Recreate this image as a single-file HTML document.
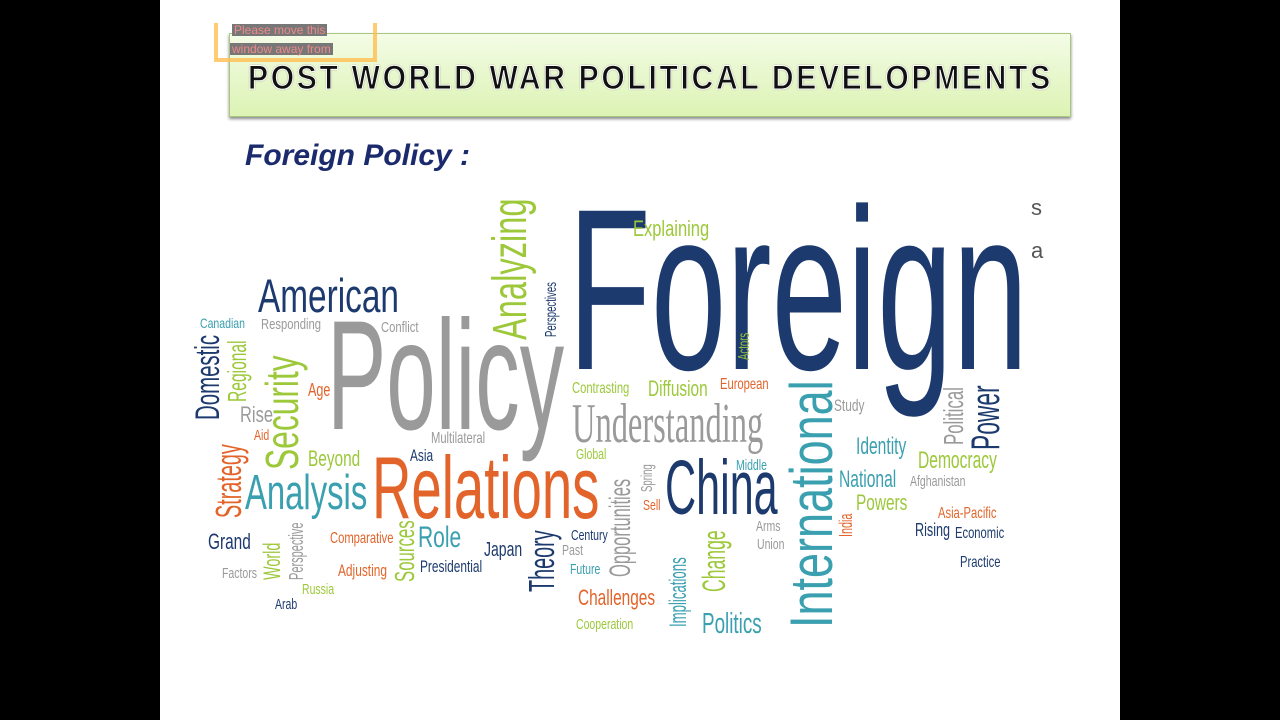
<!DOCTYPE html>
<html><head><meta charset="utf-8"><style>
*{margin:0;padding:0;box-sizing:border-box}
body{width:1280px;height:720px;background:#000;position:relative;overflow:hidden;font-family:"Liberation Sans",sans-serif}
#slide{position:absolute;left:160px;top:0;width:960px;height:720px;background:#fff}
.w{position:absolute;line-height:1;white-space:nowrap;transform-origin:left top;font-family:"Liberation Sans",sans-serif}
.n{color:#1d3a6e}.g{color:#9a9a9a}.o{color:#e2642a}.t{color:#3aa0b0}.gr{color:#9cc83a}
</style></head><body>
<div id="slide"></div>
<div style="position:absolute;left:229px;top:33px;width:842px;height:84px;background:linear-gradient(#f4fce6,#dcf3b4);border:1px solid #a8c880;box-shadow:0 2px 3px #888"></div>
<div class="w" style="left:248px;top:61px;font-size:34px;font-weight:bold;color:#111;letter-spacing:3px;transform:scaleX(0.885);-webkit-text-stroke:1px #fff;text-shadow:0 0 2px #666">POST WORLD WAR POLITICAL DEVELOPMENTS</div>
<div style="position:absolute;left:214px;top:23px;width:163px;height:39px;border:4px solid rgba(255,190,80,.8);border-top:none"></div>
<div class="w" style="left:232px;top:24px;font-size:12px;color:#e88;background:#777;padding:0 2px">Please move this</div>
<div class="w" style="left:230px;top:43px;font-size:12px;color:#e88;background:#777;padding:0 2px">window away from</div>
<div class="w" style="left:245px;top:141px;font-size:30px;font-weight:bold;font-style:italic;color:#1a2a6c">Foreign Policy :</div>
<div class="w" style="left:1031px;top:197px;font-size:22px;color:#555">s</div>
<div class="w" style="left:1031px;top:240px;font-size:22px;color:#555">a</div>

<div class="w n" style="left:568px;top:175px;font-size:230px;transform:scaleX(.59)">Foreign</div>
<div class="w g" style="left:327px;top:298px;font-size:156px;transform:scaleX(.57)">Policy</div>
<div class="w o" style="left:372px;top:444px;font-size:88px;transform:scaleX(.62)">Relations</div>
<div class="w g" style="left:572px;top:396px;font-size:56px;transform:scaleX(.58);font-family:'Liberation Serif',serif">Understanding</div>
<div class="w n" style="left:665px;top:450px;font-size:77px;transform:scaleX(.56)">China</div>
<div class="w n" style="left:258px;top:272px;font-size:47px;transform:scaleX(.71)">American</div>
<div class="w t" style="left:245px;top:469px;font-size:49px;transform:scaleX(.67)">Analysis</div>
<div class="w gr" style="left:633px;top:218px;font-size:22px;transform:scaleX(.75)">Explaining</div>

<div class="w t" style="left:782px;top:628px;font-size:60px;transform:rotate(-90deg) scaleX(.75)">International</div>
<div class="w gr" style="left:259px;top:470px;font-size:46px;transform:rotate(-90deg) scaleX(.69)">Security</div>
<div class="w gr" style="left:487px;top:340px;font-size:48px;transform:rotate(-90deg) scaleX(.68)">Analyzing</div>
<div class="w n" style="left:966px;top:450px;font-size:40px;transform:rotate(-90deg) scaleX(.57)">Power</div>
<div class="w g" style="left:940px;top:445px;font-size:28px;transform:rotate(-90deg) scaleX(.6)">Political</div>
<div class="w n" style="left:191px;top:420px;font-size:34px;transform:rotate(-90deg) scaleX(.6)">Domestic</div>
<div class="w gr" style="left:224px;top:402px;font-size:26px;transform:rotate(-90deg) scaleX(.6)">Regional</div>
<div class="w o" style="left:211px;top:518px;font-size:36px;transform:rotate(-90deg) scaleX(.55)">Strategy</div>
<div class="w gr" style="left:261px;top:580px;font-size:24px;transform:rotate(-90deg) scaleX(.6)">World</div>
<div class="w g" style="left:287px;top:580px;font-size:20px;transform:rotate(-90deg) scaleX(.55)">Perspective</div>
<div class="w gr" style="left:391px;top:582px;font-size:28px;transform:rotate(-90deg) scaleX(.6)">Sources</div>
<div class="w n" style="left:524px;top:592px;font-size:36px;transform:rotate(-90deg) scaleX(.55)">Theory</div>
<div class="w g" style="left:606px;top:577px;font-size:30px;transform:rotate(-90deg) scaleX(.55)">Opportunities</div>
<div class="w gr" style="left:698px;top:592px;font-size:32px;transform:rotate(-90deg) scaleX(.55)">Change</div>
<div class="w t" style="left:667px;top:627px;font-size:24px;transform:rotate(-90deg) scaleX(.55)">Implications</div>
<div class="w n" style="left:544px;top:337px;font-size:16px;transform:rotate(-90deg) scaleX(.6)">Perspectives</div>
<div class="w o" style="left:837px;top:537px;font-size:18px;transform:rotate(-90deg) scaleX(.6)">India</div>
<div class="w gr" style="left:737px;top:360px;font-size:16px;transform:rotate(-90deg) scaleX(.6)">Actors</div>
<div class="w g" style="left:640px;top:492px;font-size:16px;transform:rotate(-90deg) scaleX(.6)">Spring</div>

<div class="w t" style="left:200px;top:316px;font-size:14px;transform:scaleX(.75)">Canadian</div>
<div class="w g" style="left:261px;top:317px;font-size:15px;transform:scaleX(.75)">Responding</div>
<div class="w g" style="left:381px;top:320px;font-size:15px;transform:scaleX(.75)">Conflict</div>
<div class="w g" style="left:240px;top:404px;font-size:22px;transform:scaleX(.75)">Rise</div>
<div class="w o" style="left:308px;top:381px;font-size:18px;transform:scaleX(.7)">Age</div>
<div class="w o" style="left:254px;top:428px;font-size:15px;transform:scaleX(.7)">Aid</div>
<div class="w gr" style="left:308px;top:448px;font-size:22px;transform:scaleX(.7)">Beyond</div>
<div class="w n" style="left:410px;top:447px;font-size:17px;transform:scaleX(.7)">Asia</div>
<div class="w g" style="left:431px;top:431px;font-size:16px;transform:scaleX(.7)">Multilateral</div>
<div class="w n" style="left:208px;top:531px;font-size:22px;transform:scaleX(.7)">Grand</div>
<div class="w g" style="left:222px;top:566px;font-size:15px;transform:scaleX(.7)">Factors</div>
<div class="w n" style="left:275px;top:597px;font-size:15px;transform:scaleX(.7)">Arab</div>
<div class="w o" style="left:330px;top:531px;font-size:16px;transform:scaleX(.7)">Comparative</div>
<div class="w o" style="left:338px;top:562px;font-size:17px;transform:scaleX(.7)">Adjusting</div>
<div class="w t" style="left:418px;top:523px;font-size:30px;transform:scaleX(.7)">Role</div>
<div class="w n" style="left:420px;top:558px;font-size:17px;transform:scaleX(.7)">Presidential</div>
<div class="w n" style="left:484px;top:540px;font-size:20px;transform:scaleX(.7)">Japan</div>
<div class="w gr" style="left:302px;top:582px;font-size:15px;transform:scaleX(.7)">Russia</div>
<div class="w n" style="left:571px;top:528px;font-size:15px;transform:scaleX(.7)">Century</div>
<div class="w g" style="left:562px;top:543px;font-size:15px;transform:scaleX(.7)">Past</div>
<div class="w t" style="left:570px;top:562px;font-size:15px;transform:scaleX(.7)">Future</div>
<div class="w o" style="left:578px;top:587px;font-size:22px;transform:scaleX(.7)">Challenges</div>
<div class="w gr" style="left:576px;top:617px;font-size:15px;transform:scaleX(.7)">Cooperation</div>
<div class="w t" style="left:702px;top:610px;font-size:29px;transform:scaleX(.65)">Politics</div>
<div class="w gr" style="left:576px;top:447px;font-size:15px;transform:scaleX(.7)">Global</div>
<div class="w gr" style="left:572px;top:381px;font-size:16px;transform:scaleX(.7)">Contrasting</div>
<div class="w gr" style="left:648px;top:378px;font-size:22px;transform:scaleX(.7)">Diffusion</div>
<div class="w o" style="left:720px;top:377px;font-size:16px;transform:scaleX(.7)">European</div>
<div class="w t" style="left:856px;top:435px;font-size:24px;transform:scaleX(.65)">Identity</div>
<div class="w gr" style="left:918px;top:449px;font-size:24px;transform:scaleX(.65)">Democracy</div>
<div class="w t" style="left:839px;top:468px;font-size:24px;transform:scaleX(.65)">National</div>
<div class="w g" style="left:910px;top:474px;font-size:15px;transform:scaleX(.7)">Afghanistan</div>
<div class="w gr" style="left:856px;top:492px;font-size:22px;transform:scaleX(.7)">Powers</div>
<div class="w o" style="left:938px;top:506px;font-size:16px;transform:scaleX(.7)">Asia-Pacific</div>
<div class="w n" style="left:915px;top:521px;font-size:18px;transform:scaleX(.7)">Rising</div>
<div class="w n" style="left:955px;top:526px;font-size:16px;transform:scaleX(.7)">Economic</div>
<div class="w n" style="left:960px;top:555px;font-size:16px;transform:scaleX(.7)">Practice</div>
<div class="w g" style="left:834px;top:397px;font-size:17px;transform:scaleX(.7)">Study</div>
<div class="w t" style="left:736px;top:458px;font-size:15px;transform:scaleX(.7)">Middle</div>
<div class="w o" style="left:643px;top:498px;font-size:15px;transform:scaleX(.7)">Sell</div>
<div class="w g" style="left:756px;top:519px;font-size:15px;transform:scaleX(.7)">Arms</div>
<div class="w g" style="left:757px;top:537px;font-size:15px;transform:scaleX(.7)">Union</div>
</body></html>
